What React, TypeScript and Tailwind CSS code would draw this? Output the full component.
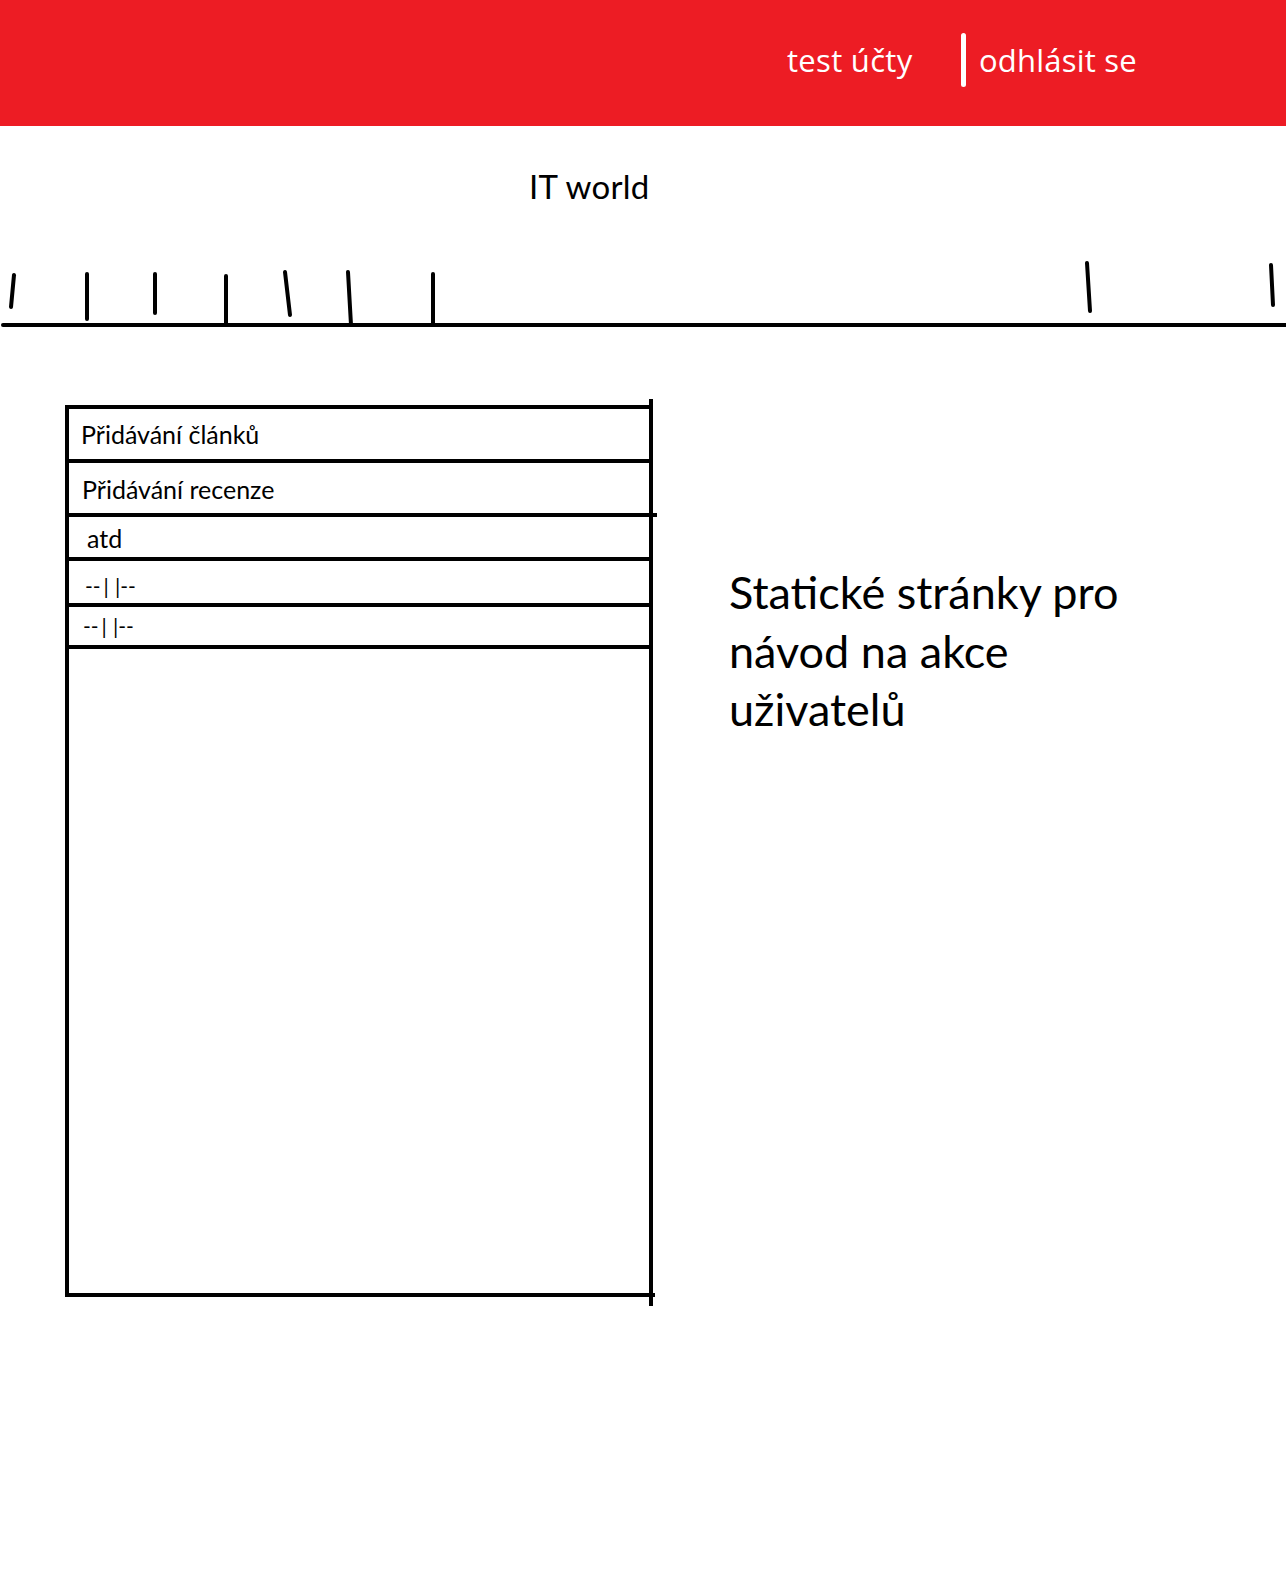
import React from 'react';

// hand-drawn nav separators: [x1, y1, x2, y2] in page coords
const TICKS: [number, number, number, number][] = [
  [14, 275, 11, 307],
  [87, 274, 87, 319],
  [155, 274, 155, 313],
  [226, 276, 226, 325],
  [285, 272, 290, 315],
  [348, 272, 351, 325],
  [433, 274, 433, 325],
  [1087, 263, 1090, 311],
  [1271, 265, 1273, 305],
];

const Divider = ({ overhang = '' }: { overhang?: string }) => (
  <div className={`h-[4px] bg-black ${overhang}`} />
);

// "--||--" placeholder, bars spaced wider than the dashes
const Ditto = () => (
  <>
    <span>--</span>
    <span className="ml-[3px] mr-[6px]">|</span>
    <span>|--</span>
  </>
);

const NavRuler = () => (
  <svg width="1286" height="75" viewBox="0 255 1286 75" className="block">
    {TICKS.map(([x1, y1, x2, y2], i) => (
      <line key={i} x1={x1} y1={y1} x2={x2} y2={y2} stroke="#000" strokeWidth="4" strokeLinecap="round" />
    ))}
    <line x1="3" y1="325" x2="1286" y2="325" stroke="#000" strokeWidth="4" strokeLinecap="round" />
  </svg>
);

export default function App() {
  return (
    <div className="min-h-[1596px] w-[1286px] bg-white text-black font-['Lato',sans-serif]">
      <header className="h-[126px] bg-[#ed1c24] flex items-start pl-[787px] text-white font-['Open_Sans',sans-serif]">
        <span className="w-[174px] mt-[39px] text-[31px] leading-[42px] tracking-[0.3px]">test účty</span>
        <span className="mt-[33px] w-[5px] h-[54px] rounded-full bg-white" />
        <span className="ml-[13px] mt-[39px] text-[31px] leading-[42px] tracking-[0.2px]">odhlásit se</span>
      </header>

      <h1 className="mt-[40px] pl-[529px] text-[33px] leading-[40px] font-normal tracking-[0.3px]">IT world</h1>

      <nav className="mt-[49px]">
        <NavRuler />
      </nav>

      <main className="mt-[69px] flex items-start pl-[65px]">
        <div className="w-[584px] h-[892px] mt-[6px] border-l-4 border-black flex flex-col">
          <Divider />
          <div className="h-[50px] pt-[10px] pl-[12px] text-[25px] leading-[30px]">Přidávání článků</div>
          <Divider />
          <div className="h-[50px] pt-[11px] pl-[13px] text-[25px] leading-[30px]">Přidávání recenze</div>
          <Divider overhang="-mr-[8px]" />
          <div className="h-[40px] pt-[6px] pl-[18px] text-[25px] leading-[30px]">atd</div>
          <Divider overhang="-mr-[4px]" />
          <div className="h-[42px] pt-[13px] pl-[16px] text-[21px] leading-[24px]">
            <Ditto />
          </div>
          <Divider />
          <div className="h-[38px] pt-[7px] pl-[14px] text-[21px] leading-[24px]">
            <Ditto />
          </div>
          <Divider />
          <div className="flex-1" />
          <Divider overhang="-mr-[6px]" />
        </div>
        <div className="w-[4px] h-[907px] bg-black" />

        <p className="ml-[76px] mt-[164px] text-[45px] leading-[58.5px]">
          Statické stránky pro
          <br />
          návod na akce
          <br />
          uživatelů
        </p>
      </main>
    </div>
  );
}
